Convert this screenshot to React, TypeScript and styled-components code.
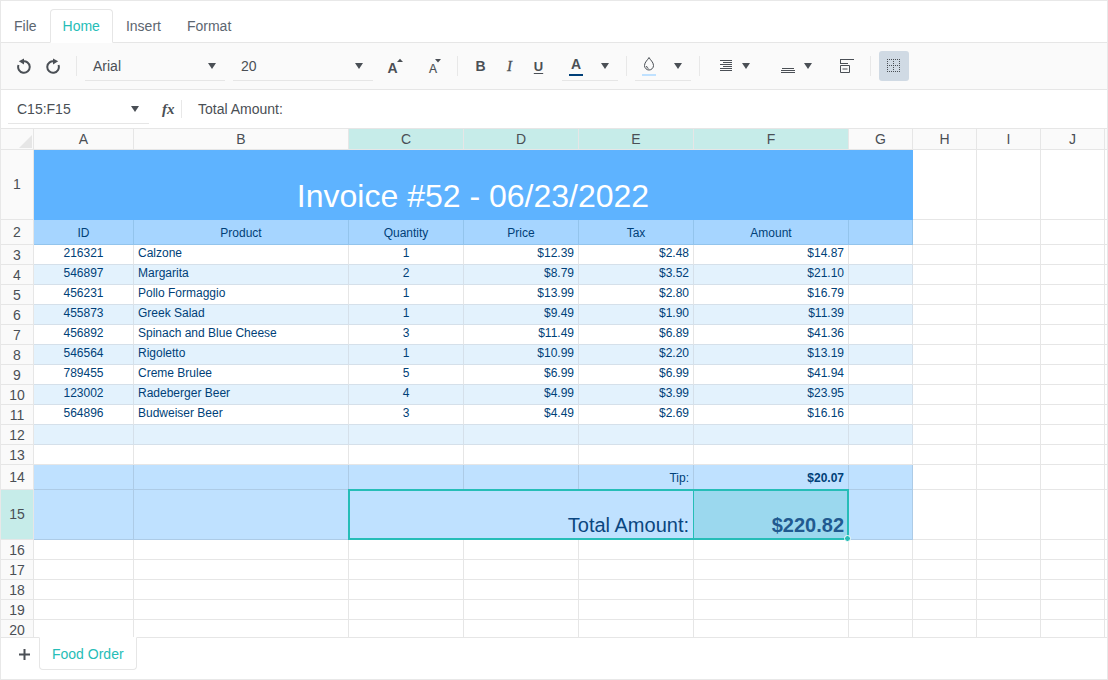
import React from "react";
import styled, { createGlobalStyle } from "styled-components";

const Global = createGlobalStyle`
  html, body { margin: 0; padding: 0; background: #fff; }
  body { font-family: "Liberation Sans", Arial, sans-serif; }
`;

const TEAL = "#26bdb7";
const INK = "#4a4f55";
const NAVY = "#003f78";

const Frame = styled.div`
  width: 1108px; height: 680px; box-sizing: border-box;
  border: 1px solid #e8e8e8; display: flex; flex-direction: column; overflow: hidden;
  color: ${INK}; font-size: 14px;
`;
const MenuBar = styled.div`
  height: 42px; box-sizing: border-box; flex: none; display: flex; align-items: flex-end;
  border-bottom: 1px solid #e6e6e6;
`;
const MenuTab = styled.div<{ $active?: boolean }>`
  height: 34px; box-sizing: border-box; padding: 0 12px; display: flex; align-items: center;
  border: 1px solid ${p => (p.$active ? "#e6e6e6" : "transparent")};
  border-bottom: ${p => (p.$active ? "1px solid #fff" : "1px solid transparent")};
  border-radius: 4px 4px 0 0; margin-bottom: -1px;
  color: ${p => (p.$active ? TEAL : "#5c6670")};
`;
const Toolbar = styled.div`
  height: 47px; box-sizing: border-box; flex: none; display: flex; align-items: center;
  padding-left: 9px; background: #fafafa; border-bottom: 1px solid #e6e6e6;
`;
const ToolButton = styled.div<{ $w?: number; $active?: boolean }>`
  width: ${p => p.$w ?? 30}px; height: 30px; flex: none; display: flex; align-items: center; justify-content: center;
  border-radius: 3px; background: ${p => (p.$active ? "#d0dae4" : "transparent")};
`;
const Sep = styled.div`
  width: 1px; height: 20px; background: #e8e8e8; margin: 0 8px; flex: none;
`;
const Gap = styled.div<{ $w: number }>`
  width: ${p => p.$w}px; flex: none;
`;
const Select = styled.div<{ $w: number; $pad?: number; $arrow?: number }>`
  width: ${p => p.$w}px; height: 30px; box-sizing: border-box; flex: none; display: flex; align-items: center;
  justify-content: space-between; padding: 0 ${p => p.$arrow ?? 9}px 0 ${p => p.$pad ?? 8}px;
  border-bottom: 1px solid #e6e6e6; color: ${INK};
`;
const Caret = styled.span`
  width: 0; height: 0; flex: none; border-left: 4.5px solid transparent; border-right: 4.5px solid transparent;
  border-top: 6px solid ${INK};
`;
const Pair = styled.div<{ $w: number; $gap: number }>`
  width: ${p => p.$w}px; height: 30px; flex: none; display: flex; align-items: center; justify-content: center; gap: ${p => p.$gap}px;
`;
const FormulaBar = styled.div`
  height: 38px; box-sizing: border-box; flex: none; display: flex; align-items: center; padding-left: 7px;
`;
const Fx = styled.span`
  font-family: "Liberation Serif", serif; font-style: italic; font-weight: 700; font-size: 15px; color: ${INK};
  margin-left: 13px; width: 19px;
`;
const FxSep = styled.div`
  width: 1px; height: 18px; background: #e8e8e8; flex: none;
`;
const FormulaText = styled.div`
  margin-left: 16px; color: ${INK};
`;
const SheetArea = styled.div`
  flex: 1; min-height: 0; overflow: hidden; border-top: 1px solid #e6e6e6;
`;
const Sheet = styled.div`
  position: relative; display: grid;
  grid-template-columns: 33px 100px 215px 115px 115px 115px 155px 64px 64px 64px 64px 1fr;
  grid-template-rows: 21px 70px 25px repeat(11, 20px) 25px 50px repeat(5, 20px);
`;
const Head = styled.div<{ $sel?: boolean; $pb?: number }>`
  box-sizing: border-box; display: flex; align-items: center; justify-content: center;
  padding-bottom: ${p => p.$pb ?? 0}px;
  background: ${p => (p.$sel ? "#c6ece9" : "#fafafa")};
  border-right: 1px solid #e6e6e6; border-bottom: 1px solid #e6e6e6;
  color: ${INK}; font-size: 14px;
`;
const Corner = styled(Head)`
  position: relative; overflow: hidden;
  &::after {
    content: ""; position: absolute; right: 1px; bottom: 1px; width: 0; height: 0;
    border-left: 13px solid transparent; border-bottom: 13px solid #e6e6e6;
  }
`;
type Kind = "plain" | "data" | "alt" | "title" | "head" | "sum";
const bg: Record<Kind, string> = { plain: "#fff", data: "#fff", alt: "#e3f2fd", title: "#5eb3ff", head: "#a6d5ff", sum: "#bfe1ff" };
const line: Record<Kind, string> = { plain: "#e6e6e6", data: "#e6e6e6", alt: "#d5e0ea", title: "#5eb3ff", head: "#93c4ec", sum: "#adcbe6" };
const rule: Record<Kind, string> = { plain: "#e6e6e6", data: "#d5e0ea", alt: "#d5e0ea", title: "#5eb3ff", head: "#93c4ec", sum: "#adcbe6" };
const Cell = styled.div<{ $k: Kind; $a?: string; $size?: number; $bold?: boolean; $span?: number; $v?: string; $fill?: string; $pb?: number; $pt?: number; $ink?: string }>`
  box-sizing: border-box; display: flex; padding: ${p => p.$pt ?? 0}px 4px ${p => p.$pb ?? 3}px; white-space: nowrap; overflow: hidden;
  align-items: ${p => p.$v ?? "center"};
  justify-content: ${p => p.$a ?? "flex-start"};
  grid-column: span ${p => p.$span ?? 1};
  background: ${p => p.$fill ?? bg[p.$k]};
  border-right: 1px solid ${p => line[p.$k]}; border-bottom: 1px solid ${p => rule[p.$k]};
  color: ${p => p.$ink ?? (p.$k === "title" ? "#fff" : NAVY)};
  font-size: ${p => p.$size ?? 12}px; font-weight: ${p => (p.$bold ? 700 : 400)};
`;
const Selection = styled.div`
  position: absolute; left: 347px; top: 360px; width: 501px; height: 51px; box-sizing: border-box;
  border: 2px solid ${TEAL}; pointer-events: none;
  &::before {
    content: ""; position: absolute; left: 343px; top: 0; bottom: 0; width: 1px; background: ${TEAL};
  }
  &::after {
    content: ""; position: absolute; right: -4px; bottom: -4px; width: 5px; height: 5px; border-radius: 50%;
    background: ${TEAL}; border: 1px solid #fff;
  }
`;
const BottomBar = styled.div`
  height: 42px; box-sizing: border-box; flex: none; display: flex; align-items: flex-start;
  border-top: 1px solid #e6e6e6; background: #fff;
`;
const AddButton = styled.div`
  width: 38px; height: 32px; display: flex; align-items: center; justify-content: center; flex: none; padding-left: 8px; box-sizing: border-box;
`;
const SheetTab = styled.div`
  height: 33px; box-sizing: border-box; margin-top: -1px; padding: 0 12px; display: flex; align-items: center; color: ${TEAL};
  border: 1px solid #e6e6e6; border-top-color: #fff; border-radius: 0 0 4px 4px;
`;

const Ico = styled.svg<{ $flip?: boolean }>`
  display: block; flex: none;
  transform: ${p => (p.$flip ? "scaleX(-1)" : "none")};
`;
const Undo = ({ flip }: { flip?: boolean }) => (
  <Ico $flip={flip} width="16" height="16" viewBox="0 0 16 16" fill="none">
    <path d="M6.500 3.400A5.800 5.800 0 1 1 2.500 7" stroke={INK} strokeWidth="2" />
    <path d="M2.800 3.300 8 .4v6z" fill={INK} />
  </Ico>
);
const SizeUp = () => (
  <Ico width="18" height="20" viewBox="0 0 18 20">
    <text x="2.500" y="17" fontFamily="Liberation Sans" fontWeight="700" fontSize="14" fill={INK}>A</text>
    <path d="M12 6 15 2.800 18 6z" fill={INK} />
  </Ico>
);
const SizeDown = () => (
  <Ico width="18" height="20" viewBox="0 0 18 20">
    <text x="4" y="17" fontFamily="Liberation Sans" fontWeight="400" fontSize="12" fill={INK} stroke={INK} strokeWidth=".2">A</text>
    <path d="M10 3h6l-3 3.500z" fill={INK} />
  </Ico>
);
const BoldMark = styled.span`
  font-size: 14px; font-weight: 700; color: ${INK};
`;
const ItalicMark = styled.span`
  font-family: "Liberation Serif", serif; font-size: 15px; font-style: italic; color: ${INK}; -webkit-text-stroke: 0.3px ${INK};
`;
const UnderMark = styled.span`
  font-size: 13px; font-weight: 700; color: ${INK}; text-decoration: underline; text-underline-offset: 2px;
`;
const ColorA = () => (
  <Ico width="14" height="20" viewBox="0 0 14 20">
    <text x="7" y="13" textAnchor="middle" fontFamily="Liberation Sans" fontWeight="700" fontSize="14" fill={INK}>A</text>
    <rect x="0" y="18" width="14" height="2" fill={NAVY} />
  </Ico>
);
const Drop = () => (
  <Ico width="14" height="20" viewBox="0 0 14 20" fill="none">
    <path d="M7 1.500C6 3.800 2.500 6 2.500 9.500a4.500 4.500 0 0 0 9 0C11.500 6 8 3.800 7 1.500z" stroke={INK} strokeWidth="1" />
    <path d="M4.500 10a2.500 2.500 0 0 0 2 2.400" stroke={INK} strokeWidth="1" />
    <rect x="0" y="18" width="14" height="2" fill="#bfe1ff" />
  </Ico>
);
const AlignRight = () => (
  <Ico width="12" height="14" viewBox="0 0 12 14" fill={INK}>
    <rect x="0" y="1" width="12" height="1" /><rect x="3" y="3" width="9" height="1" /><rect x="0" y="5" width="12" height="1" />
    <rect x="3" y="7" width="9" height="1" /><rect x="0" y="9" width="12" height="1" /><rect x="0" y="11" width="12" height="1" />
  </Ico>
);
const AlignBottom = () => (
  <Ico width="14" height="14" viewBox="0 0 14 14" fill={INK}>
    <rect x="1" y="9" width="12" height="1" /><rect x="0" y="11" width="14" height="1" /><rect x="0" y="13" width="14" height="1" />
  </Ico>
);
const Wrap = () => (
  <Ico width="14" height="16" viewBox="0 0 14 16" fill="none" stroke={INK}>
    <path d="M0 1.500h14M.5 1v4.500M0 5.500h8M.5 7.500h9v7h-9zM2.500 11h5" />
  </Ico>
);
const Borders = () => (
  <Ico width="14" height="14" viewBox="0 0 14 14" fill="none" stroke={INK} strokeDasharray="1 1" shapeRendering="crispEdges">
    <path d="M0 .5h14M0 6.500h14M0 12.500h14M.5 0v14M6.500 0v14M12.500 0v14" />
  </Ico>
);

const cols = ["A", "B", "C", "D", "E", "F", "G", "H", "I", "J"];
const items: [string, string, string, string, string, string][] = [
  ["216321", "Calzone", "1", "$12.39", "$2.48", "$14.87"],
  ["546897", "Margarita", "2", "$8.79", "$3.52", "$21.10"],
  ["456231", "Pollo Formaggio", "1", "$13.99", "$2.80", "$16.79"],
  ["455873", "Greek Salad", "1", "$9.49", "$1.90", "$11.39"],
  ["456892", "Spinach and Blue Cheese", "3", "$11.49", "$6.89", "$41.36"],
  ["546564", "Rigoletto", "1", "$10.99", "$2.20", "$13.19"],
  ["789455", "Creme Brulee", "5", "$6.99", "$6.99", "$41.94"],
  ["123002", "Radeberger Beer", "4", "$4.99", "$3.99", "$23.95"],
  ["564896", "Budweiser Beer", "3", "$4.49", "$2.69", "$16.16"],
];

const Blank = ({ k, n }: { k: Kind; n: number }) => (
  <>{Array.from({ length: n }, (_, i) => <Cell key={i} $k={k} />)}</>
);

export default function App() {
  return (
    <Frame>
      <Global />
      <MenuBar>
        <MenuTab>File</MenuTab>
        <MenuTab $active>Home</MenuTab>
        <MenuTab>Insert</MenuTab>
        <MenuTab>Format</MenuTab>
      </MenuBar>
      <Toolbar>
        <ToolButton $w={28}><Undo /></ToolButton>
        <ToolButton $w={30}><Undo flip /></ToolButton>
        <Sep />
        <Select $w={140}>Arial<Caret /></Select>
        <Gap $w={8} />
        <Select $w={140} $arrow={10}>20<Caret /></Select>
        <Gap $w={6} />
        <ToolButton><SizeUp /></ToolButton>
        <Gap $w={10} />
        <ToolButton><SizeDown /></ToolButton>
        <Sep />
        <ToolButton $w={29}><BoldMark>B</BoldMark></ToolButton>
        <ToolButton $w={29}><ItalicMark>I</ItalicMark></ToolButton>
        <ToolButton $w={29}><UnderMark>U</UnderMark></ToolButton>
        <Gap $w={9} />
        <Select $w={56} $pad={7}><ColorA /><Caret /></Select>
        <Sep />
        <Select $w={56} $pad={7}><Drop /><Caret /></Select>
        <Sep />
        <Pair $w={54} $gap={10}><AlignRight /><Caret /></Pair>
        <Gap $w={7} />
        <Pair $w={54} $gap={9}><AlignBottom /><Caret /></Pair>
        <Gap $w={9} />
        <ToolButton><Wrap /></ToolButton>
        <Sep />
        <ToolButton $active><Borders /></ToolButton>
      </Toolbar>
      <FormulaBar>
        <Select $w={141} $pad={9} $arrow={10}>C15:F15<Caret /></Select>
        <Fx>fx</Fx>
        <FxSep />
        <FormulaText>Total Amount:</FormulaText>
      </FormulaBar>
      <SheetArea>
        <Sheet>
          <Corner />
          {cols.map(c => <Head key={c} $sel={"CDEF".includes(c)} $pb={1}>{c}</Head>)}
          <Head />

          <Head $pb={2}>1</Head>
          <Cell $k="title" $span={7} $a="center" $size={32} $v="flex-end" $pb={4}>Invoice #52 - 06/23/2022</Cell>
          <Blank k="plain" n={4} />

          <Head>2</Head>
          {["ID", "Product", "Quantity", "Price", "Tax", "Amount", ""].map((h, i) => (
            <Cell key={i} $k="head" $a="center" $pb={0} $pt={2}>{h}</Cell>
          ))}
          <Blank k="plain" n={4} />

          {items.map((r, i) => {
            const k: Kind = i % 2 ? "alt" : "data";
            return (
              <React.Fragment key={r[0]}>
                <Head>{i + 3}</Head>
                <Cell $k={k} $a="center">{r[0]}</Cell>
                <Cell $k={k}>{r[1]}</Cell>
                <Cell $k={k} $a="center">{r[2]}</Cell>
                <Cell $k={k} $a="flex-end">{r[3]}</Cell>
                <Cell $k={k} $a="flex-end">{r[4]}</Cell>
                <Cell $k={k} $a="flex-end">{r[5]}</Cell>
                <Cell $k={k} />
                <Blank k="plain" n={4} />
              </React.Fragment>
            );
          })}

          <Head>12</Head>
          <Blank k="alt" n={7} />
          <Blank k="plain" n={4} />

          <Head>13</Head>
          <Blank k="plain" n={11} />

          <Head>14</Head>
          <Blank k="sum" n={4} />
          <Cell $k="sum" $a="flex-end" $pb={0} $pt={2}>Tip:</Cell>
          <Cell $k="sum" $a="flex-end" $bold $pb={0} $pt={2}>$20.07</Cell>
          <Cell $k="sum" />
          <Blank k="plain" n={4} />

          <Head $sel $pb={2}>15</Head>
          <Blank k="sum" n={2} />
          <Cell $k="sum" $span={3} $a="flex-end" $v="flex-end" $size={20} $pb={2} $ink="#0a4680">Total Amount:</Cell>
          <Cell $k="sum" $a="flex-end" $v="flex-end" $size={20} $bold $pb={2} $fill="#9bd8ee" $ink="#215a90">$220.82</Cell>
          <Cell $k="sum" />
          <Blank k="plain" n={4} />

          {[16, 17, 18, 19, 20].map(n => (
            <React.Fragment key={n}>
              <Head>{n}</Head>
              <Blank k="plain" n={11} />
            </React.Fragment>
          ))}
          <Selection />
        </Sheet>
      </SheetArea>
      <BottomBar>
        <AddButton>
          <Ico width="11" height="11" viewBox="0 0 11 11"><path d="M4.500 0h2v4.500H11v2H6.500V11h-2V6.500H0v-2h4.500z" fill={INK} /></Ico>
        </AddButton>
        <SheetTab>Food Order</SheetTab>
      </BottomBar>
    </Frame>
  );
}
